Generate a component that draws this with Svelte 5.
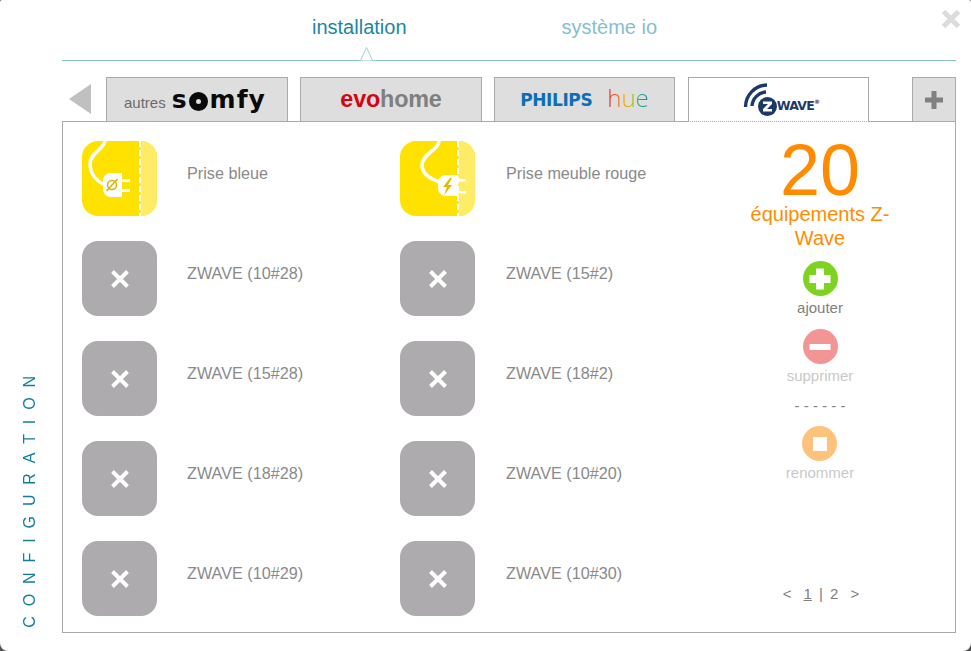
<script>
	const items = [
		{ label: 'Prise bleue', type: 'plugOff' },
		{ label: 'Prise meuble rouge', type: 'plugOn' },
		{ label: 'ZWAVE (10#28)' },
		{ label: 'ZWAVE (15#2)' },
		{ label: 'ZWAVE (15#28)' },
		{ label: 'ZWAVE (18#2)' },
		{ label: 'ZWAVE (18#28)' },
		{ label: 'ZWAVE (10#20)' },
		{ label: 'ZWAVE (10#29)' },
		{ label: 'ZWAVE (10#30)' }
	];
</script>

<div class="dialog">
	<button class="close" aria-label="fermer">
		<svg width="20" height="20" viewBox="0 0 20 20">
			<path d="M2.5 2.5 17.5 17.5M17.5 2.5 2.5 17.5" stroke="#dcdcdc" stroke-width="5" />
		</svg>
	</button>

	<nav class="top">
		<span class="top-link active">installation</span>
		<span class="top-link">système io</span>
		<svg class="notch" width="16" height="15" viewBox="0 0 16 15">
			<path d="M0 14.5H1.5L7.5 1.5 13.5 14.5H16" fill="#fff" stroke="#9fd0d8" stroke-width="1" />
		</svg>
	</nav>

	<div class="side-label"><span>CONFIGURATION</span></div>

	<div class="main">
		<div class="tabs">
			<div class="back"></div>
			<div class="tab first">
				<span class="autres">autres</span>
				<span class="somfy">s<i></i>mfy</span>
			</div>
			<div class="tab"><span class="evo">evo<b>home</b></span></div>
			<div class="tab hue-tab">
				<span class="philips">PHILIPS</span>
				<span class="hue">hue</span>
			</div>
			<div class="tab current">
				<svg class="waves" width="36" height="34" viewBox="0 0 36 34">
					<g fill="none" stroke="#1c3a68" stroke-width="3.4">
						<path d="M2.5 24A22 22 0 0 1 24 2" />
						<path d="M9 23A15 15 0 0 1 23 9" />
					</g>
					<circle cx="24.5" cy="23.5" r="9.5" fill="#1c3a68" />
					<path d="M20 18.5H29V21L24 26H29V28.5H20V26L25 21H20Z" fill="#fff" />
				</svg>
				<span class="wave">WAVE<sup>®</sup></span>
			</div>
			<div class="tab plus">
				<svg width="18" height="18" viewBox="0 0 18 18">
					<path d="M9 0V18M0 9H18" stroke="#808080" stroke-width="5" />
				</svg>
			</div>
		</div>

		<div class="panel">
			<div class="grid">
				{#each items as item}
					<div class="item">
						{#if item.type}
							<div class="icon yellow">
								<span class="band"></span>
								{#if item.type === 'plugOff'}
									<svg width="75" height="75" viewBox="0 0 75 75">
										<path d="M58 0V75" stroke="#fff" stroke-width="2" stroke-dasharray="6 3" />
										<path d="M23 0C22 8 8 12 8 23 8 34 16 41 23 44" fill="none" stroke="#fff" stroke-width="3.5" />
										<path d="M29 32H40V38H48V41H40V48H48V51H40V56H29C24 56 21 52 21 48V40C21 35 24 32 29 32Z" fill="#fff" />
										<circle cx="30" cy="44" r="4.5" fill="none" stroke="#d4b400" stroke-width="1.5" />
										<path d="M24.5 50 35.5 38" stroke="#d4b400" stroke-width="1.5" />
									</svg>
								{:else}
									<svg width="75" height="75" viewBox="0 0 75 75">
										<path d="M58 0V75" stroke="#fff" stroke-width="2" stroke-dasharray="6 3" />
										<path d="M39 0C39 9 22 13 22 24 22 33 30 38 40 41" fill="none" stroke="#fff" stroke-width="3.5" />
										<path d="M46 34H58V38H66V40.5H58V50H66V52.5H58V55H46C41 55 38 51 38 47V42C38 37 41 34 46 34Z" fill="#fff" />
										<path d="M50 37 43 46H47L44 54 52 44H48L52 37Z" fill="#e0bc00" />
									</svg>
								{/if}
							</div>
						{:else}
							<div class="icon grey">
								<svg width="20" height="20" viewBox="0 0 20 20">
									<path d="M2.5 2.5 17.5 17.5M17.5 2.5 2.5 17.5" stroke="#fff" stroke-width="4" />
								</svg>
							</div>
						{/if}
						<span class="label">{item.label}</span>
					</div>
				{/each}
			</div>

			<aside class="stats">
				<div class="count">20</div>
				<div class="count-label">équipements Z-Wave</div>
				<div class="action">
					<span class="round green">
						<svg width="22" height="22" viewBox="0 0 22 22"><path d="M11 0.5V21.5M0.5 11H21.5" stroke="#fff" stroke-width="8" /></svg>
					</span>
					<span class="action-label">ajouter</span>
				</div>
				<div class="action faded">
					<span class="round red">
						<svg width="22" height="22" viewBox="0 0 22 22"><path d="M0.5 11H21.5" stroke="#fff" stroke-width="6" /></svg>
					</span>
					<span class="action-label">supprimer</span>
				</div>
				<div class="dashes">- - - - - -</div>
				<div class="action faded">
					<span class="round orange">
						<svg width="14" height="14" viewBox="0 0 14 14"><rect width="14" height="14" fill="#fff" /></svg>
					</span>
					<span class="action-label">renommer</span>
				</div>
				<div class="pager">
					<span>&lt;</span>
					<span class="pages"><u>1</u> | 2</span>
					<span>&gt;</span>
				</div>
			</aside>
		</div>
	</div>
</div>

<style>
	:global(body) {
		margin: 0;
		background: #555;
	}

	.dialog {
		position: relative;
		width: 971px;
		height: 651px;
		box-sizing: border-box;
		background: #fff;
		border-radius: 2px 2px 8px 8px;
		overflow: hidden;
		padding: 0 15px 18px 62px;
		font-family: "Liberation Sans", Arial, sans-serif;
		display: flex;
		flex-direction: column;
	}

	.close {
		position: absolute;
		top: 9px;
		right: 10px;
		padding: 0;
		border: 0;
		background: none;
		line-height: 0;
	}

	.top {
		position: relative;
		flex: none;
		height: 44px;
		border-bottom: 1px solid #85c0ca;
		padding: 16px 0 0 250px;
		display: flex;
		gap: 155px;
		font-size: 20px;
		line-height: 22px;
	}

	.top-link {
		color: #85bfcd;
	}

	.top-link.active {
		color: #1c86a0;
	}

	.notch {
		position: absolute;
		left: 297px;
		bottom: -1px;
	}

	.side-label {
		position: absolute;
		left: 21px;
		bottom: 23px;
		writing-mode: vertical-rl;
		transform: rotate(180deg);
		font-size: 16px;
		letter-spacing: 9.9px;
		color: #0f7f9c;
		line-height: 18px;
	}

	.main {
		flex: 1;
		display: flex;
		flex-direction: column;
		margin-top: 16px;
		min-height: 0;
	}

	.tabs {
		display: flex;
		height: 44px;
		flex: none;
		align-items: stretch;
		position: relative;
		z-index: 1;
	}

	.back {
		width: 0;
		height: 0;
		margin: 7px 15px 0 7px;
		border-style: solid;
		border-width: 15px 22px 15px 0;
		border-color: transparent #c0c0c0 transparent transparent;
	}

	.tab {
		box-sizing: border-box;
		width: 182px;
		height: 45px;
		margin-right: 12px;
		background: #dedede;
		border: 1px solid #aaa;
		display: flex;
		align-items: center;
		justify-content: center;
	}

	.tab.current {
		width: 181px;
		background: #fff;
		border-bottom: 1px dotted #aaa;
		margin-right: 43px;
		padding-left: 5px;
	}

	.tab.plus {
		width: 44px;
		margin: 0;
	}

	.tab.first {
		justify-content: flex-start;
		padding-left: 17px;
		gap: 6px;
	}

	.autres {
		font-size: 15px;
		color: #6b6b6b;
		padding-top: 5px;
	}

	.somfy {
		font-family: "DejaVu Sans", sans-serif;
		font-weight: 700;
		font-size: 25px;
		line-height: 24px;
		letter-spacing: 1px;
		color: #0a0a0a;
		display: flex;
		align-items: center;
	}

	.somfy i {
		width: 19px;
		height: 19px;
		box-sizing: border-box;
		border: 7px solid #0a0a0a;
		border-radius: 50%;
		margin: 3px 2px 0 1px;
	}

	.evo {
		font-size: 23.4px;
		font-weight: 700;
		color: #d40511;
		letter-spacing: -0.2px;
	}

	.evo b {
		color: #7f7f7f;
	}

	.hue-tab {
		width: 181px;
		margin-right: 13px;
		gap: 15px;
	}

	.philips {
		font-family: "DejaVu Sans", sans-serif;
		font-weight: 700;
		font-size: 17px;
		color: #0b6fb8;
		letter-spacing: -0.4px;
	}

	.hue {
		font-family: "Open Sans", sans-serif;
		font-weight: 300;
		font-size: 24px;
		line-height: 24px;
		margin-top: -3px;
		background: linear-gradient(90deg, #e8202a 0%, #f0561e 22%, #f5a800 42%, #a6c400 60%, #14a884 80%, #1088c0 100%);
		-webkit-background-clip: text;
		background-clip: text;
		color: transparent;
	}

	.waves {
		margin-top: 0;
		margin-right: -2px;
	}

	.wave {
		font-family: "DejaVu Sans", sans-serif;
		font-weight: 700;
		font-size: 12.5px;
		color: #1c3a68;
		padding-top: 11px;
		letter-spacing: -0.8px;
	}

	.wave sup {
		font-size: 6px;
		vertical-align: top;
	}

	.panel {
		flex: 1;
		min-height: 0;
		position: relative;
		border: 1px solid #aaa;
		display: flex;
		padding: 19px 0 0 19px;
	}

	.grid {
		display: grid;
		grid-template-columns: 318px 318px;
		grid-auto-rows: 100px;
		flex: none;
		width: 637px;
	}

	.item {
		display: flex;
		gap: 30px;
		align-items: flex-start;
	}

	.item:nth-child(even) .label {
		margin-left: 1px;
	}

	.icon {
		position: relative;
		width: 75px;
		height: 75px;
		border-radius: 16px;
		overflow: hidden;
		flex: none;
		display: flex;
		align-items: center;
		justify-content: center;
	}

	.yellow {
		background: #ffe200;
	}

	.band {
		position: absolute;
		top: 0;
		right: 0;
		bottom: 0;
		width: 17px;
		background: #ffec66;
	}

	.yellow svg {
		position: relative;
	}

	.grey {
		background: #adabad;
	}

	.label {
		font-size: 16.2px;
		color: #8a8a8a;
		line-height: 18px;
		margin-top: 23px;
	}

	.stats {
		flex: 1;
		display: flex;
		flex-direction: column;
		align-items: center;
		margin-top: -2px;
		padding-right: 60px;
		padding-left: 26px;
	}

	.count {
		font-size: 72px;
		line-height: 63px;
		color: #ff8c00;
	}

	.count-label {
		font-size: 20px;
		line-height: 24px;
		color: #ff8c00;
		text-align: center;
		margin-bottom: 11px;
		width: 150px;
		flex: none;
	}

	.action {
		display: flex;
		flex-direction: column;
		align-items: center;
		font-size: 15px;
		color: #808080;
		margin-bottom: 13px;
	}

	.action.faded {
		color: #c9c9c9;
	}

	.action-label {
		line-height: 16px;
		margin-top: 4px;
	}

	.round {
		width: 35px;
		height: 35px;
		border-radius: 50%;
		display: flex;
		align-items: center;
		justify-content: center;
	}

	.green {
		background: #7ed321;
	}

	.red {
		background: #f19595;
	}

	.orange {
		background: #ffc27d;
	}

	.dashes {
		font-size: 15px;
		line-height: 16px;
		color: #808080;
		margin: 1px 0 12px;
	}

	.pager {
		margin-top: auto;
		margin-bottom: 30px;
		margin-left: 2px;
		display: flex;
		gap: 12px;
		font-size: 15px;
		color: #808080;
	}

	.pages {
		word-spacing: 3px;
	}
</style>
